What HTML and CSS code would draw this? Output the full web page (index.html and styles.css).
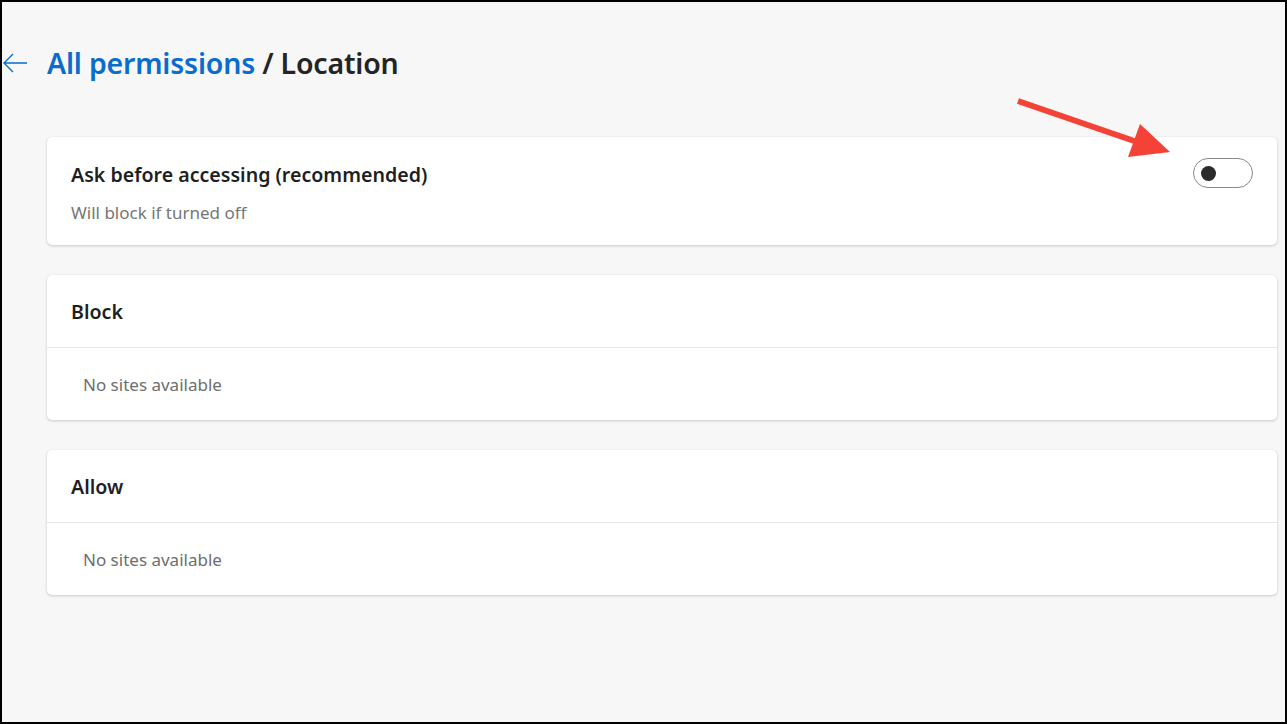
FILE: index.html
```html
<!DOCTYPE html>
<html>
<head>
<meta charset="utf-8">
<link rel="stylesheet" href="styles.css">
</head>
<body>
<div class="frame">
  <div class="header">
    <svg class="back" width="26" height="22" viewBox="0 0 26 22"><path d="M25 11H2M11 2L2 11l9 9" fill="none" stroke="#0a6ccb" stroke-width="1.4"/></svg>
    <h1 class="title"><span class="link">All permissions</span> / Location</h1>
  </div>
  <div class="cards">
    <div class="card row">
      <div class="texts">
        <div class="heading">Ask before accessing (recommended)</div>
        <div class="sub">Will block if turned off</div>
      </div>
      <div class="toggle"><span class="knob"></span></div>
    </div>
    <div class="card">
      <div class="card-head">Block</div>
      <div class="empty">No sites available</div>
    </div>
    <div class="card">
      <div class="card-head">Allow</div>
      <div class="empty">No sites available</div>
    </div>
  </div>
  <svg class="annot" width="200" height="80" viewBox="1000 90 200 80">
    <line x1="1018" y1="101" x2="1140" y2="143" stroke="#f44336" stroke-width="6"/>
    <polygon points="1170,152 1128,157 1140,124" fill="#f44336"/>
  </svg>
</div>
</body>
</html>
```
FILE: styles.css
```css
html, body { margin: 0; padding: 0; }
body { font-family: "Segoe UI", "Noto Sans", sans-serif; }
.frame {
  position: relative;
  box-sizing: border-box;
  width: 1287px;
  height: 724px;
  border: 2px solid #000;
  background: #f7f7f7;
  overflow: hidden;
}
.header {
  display: flex;
  align-items: center;
  height: 58px;
  margin-top: 32px;
}
.back { margin-left: 0; flex: none; }
.title {
  margin: 0 0 0 19px;
  font-size: 28.5px;
  font-weight: 600;
  color: #242424;
  letter-spacing: -0.2px;
}
.link { color: #0a6ccb; }
.cards {
  display: flex;
  flex-direction: column;
  gap: 30px;
  margin: 45px 8px 0 45px;
}
.card {
  background: #fff;
  border-radius: 5px;
  box-shadow: 0 1px 3px rgba(0,0,0,0.18), 0 0 1px rgba(0,0,0,0.08);
}
.row {
  display: flex;
  justify-content: space-between;
  align-items: flex-start;
  height: 108px;
  box-sizing: border-box;
  padding: 23px 24px 0 24px;
}
.heading {
  font-size: 19.6px;
  font-weight: 600;
  color: #1f1f1f;
  line-height: 30px;
}
.sub {
  font-size: 17px;
  color: #767676;
  margin-top: 12px;
  line-height: 22px;
}
.toggle {
  margin-top: -2px;
  width: 58px;
  height: 28px;
  border: 1px solid #8a8a8a;
  border-radius: 15px;
  position: relative;
  flex: none;
}
.knob {
  position: absolute;
  left: 7px;
  top: 7px;
  width: 15px;
  height: 15px;
  border-radius: 50%;
  background: #2b2b2b;
}
.card-head {
  height: 73px;
  box-sizing: border-box;
  padding: 0 24px;
  display: flex;
  align-items: center;
  font-size: 19.6px;
  font-weight: 600;
  color: #1f1f1f;
  border-bottom: 1px solid #e6e6e6;
}
.empty {
  height: 72px;
  box-sizing: border-box;
  padding: 0 36px;
  display: flex;
  align-items: center;
  font-size: 17px;
  color: #6e6e6e;
}
.annot {
  position: absolute;
  left: 998px;
  top: 88px;
}
```
